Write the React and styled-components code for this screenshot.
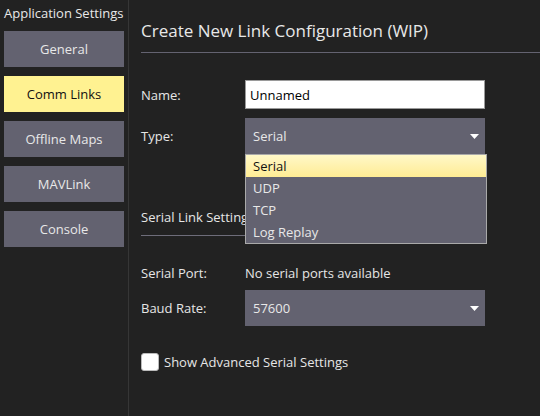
import React, { useState } from "react";
import styled, { createGlobalStyle } from "styled-components";

const GlobalStyle = createGlobalStyle`
  html, body {
    margin: 0;
    padding: 0;
    background: #222222;
  }
  body {
    font-family: "Open Sans", "Noto Sans", sans-serif;
    font-size: 13px;
    color: #e6e6e6;
  }
`;

const Page = styled.div`
  display: flex;
  width: 540px;
  height: 416px;
  background: #222222;
  overflow: hidden;
`;

const Sidebar = styled.div`
  width: 129px;
  box-sizing: border-box;
  flex-shrink: 0;
  padding: 0 0 0 4px;
  border-right: 1px solid #363636;
  display: flex;
  flex-direction: column;
  gap: 9px;
`;

const SidebarTitle = styled.div`
  padding-top: 4px;
  height: 18px;
  line-height: 18px;
  font-size: 13px;
  white-space: nowrap;
  color: #e8e8e8;
`;

const NavButton = styled.div`
  height: 36px;
  width: 120px;
  display: flex;
  align-items: center;
  justify-content: center;
  background: ${(p) => (p.active ? "#fff291" : "#636270")};
  color: ${(p) => (p.active ? "#111111" : "#e8e8e8")};
  font-size: 13px;
  cursor: pointer;
`;

const Main = styled.div`
  flex: 1;
  padding: 20px 0 0 12px;
  display: flex;
  flex-direction: column;
`;

const Title = styled.div`
  font-size: 17px;
  line-height: 22px;
  padding-bottom: 10px;
  border-bottom: 1px solid #646371;
  color: #e8e8e8;
  margin-bottom: 27px;
`;

const Row = styled.div`
  display: flex;
  align-items: center;
  margin-bottom: ${(p) => p.gap || 0}px;
`;

const Label = styled.div`
  width: 104px;
  flex-shrink: 0;
  line-height: 18px;
`;

const TextField = styled.input`
  width: 240px;
  height: 29px;
  box-sizing: border-box;
  border: 1px solid #9a9a9a;
  background: #ffffff;
  color: #000000;
  font-family: "Open Sans", sans-serif;
  font-size: 13px;
  padding: 0 4px;
  outline: none;
`;

const SelectWrap = styled.div`
  position: relative;
  width: 240px;
`;

const SelectBox = styled.div`
  height: 36px;
  background: #636270;
  display: flex;
  align-items: center;
  justify-content: space-between;
  padding: 0 5px 0 8px;
  color: #e8e8e8;
`;

const Arrow = styled.svg`
  width: 9px;
  height: 5px;
  margin-right: 1px;
`;

const Popup = styled.div`
  position: absolute;
  top: 36px;
  left: 0;
  width: 242px;
  box-sizing: border-box;
  background: #636270;
  border: 1px solid #a9a9a9;
  z-index: 2;
`;

const PopupItem = styled.div`
  height: 22px;
  line-height: 22px;
  padding-left: 7px;
  color: ${(p) => (p.selected ? "#111111" : "#e8e8e8")};
  background: ${(p) =>
    p.selected ? "linear-gradient(#fff8c8, #ffec94)" : "transparent"};
`;

const Section = styled.div`
  width: 344px;
  line-height: 18px;
  padding-bottom: 9px;
  border-bottom: 1px solid #6e6d7a;
  margin-top: 54px;
  margin-bottom: 28px;
  white-space: nowrap;
`;

const Value = styled.div`
  line-height: 18px;
`;

const CheckRow = styled.label`
  display: flex;
  align-items: center;
  gap: 5px;
  margin-top: 27px;
  cursor: pointer;
`;

const CheckBox = styled.span`
  width: 16px;
  height: 16px;
  border: 1px solid #bbbbbb;
  border-radius: 3px;
  background: #ffffff;
`;

function Select({ value, children }) {
  return (
    <SelectWrap>
      <SelectBox>
        <span>{value}</span>
        <Arrow viewBox="0 0 9 5">
          <path d="M0 0 L9 0 L4.5 5 Z" fill="#ffffff" />
        </Arrow>
      </SelectBox>
      {children}
    </SelectWrap>
  );
}

const navItems = ["General", "Comm Links", "Offline Maps", "MAVLink", "Console"];
const linkTypes = ["Serial", "UDP", "TCP", "Log Replay"];

export default function App() {
  const [active, setActive] = useState("Comm Links");

  return (
    <Page>
      <GlobalStyle />
      <Sidebar>
        <SidebarTitle>Application Settings</SidebarTitle>
        {navItems.map((n) => (
          <NavButton key={n} active={n === active} onClick={() => setActive(n)}>
            {n}
          </NavButton>
        ))}
      </Sidebar>
      <Main>
        <Title>Create New Link Configuration (WIP)</Title>
        <Row gap={9}>
          <Label>Name:</Label>
          <TextField defaultValue="Unnamed" />
        </Row>
        <Row>
          <Label>Type:</Label>
          <Select value="Serial">
            <Popup>
              {linkTypes.map((t) => (
                <PopupItem key={t} selected={t === "Serial"}>
                  {t}
                </PopupItem>
              ))}
            </Popup>
          </Select>
        </Row>
        <Section>Serial Link Settings</Section>
        <Row gap={8}>
          <Label>Serial Port:</Label>
          <Value>No serial ports available</Value>
        </Row>
        <Row>
          <Label>Baud Rate:</Label>
          <Select value="57600" />
        </Row>
        <CheckRow>
          <CheckBox />
          Show Advanced Serial Settings
        </CheckRow>
      </Main>
    </Page>
  );
}
